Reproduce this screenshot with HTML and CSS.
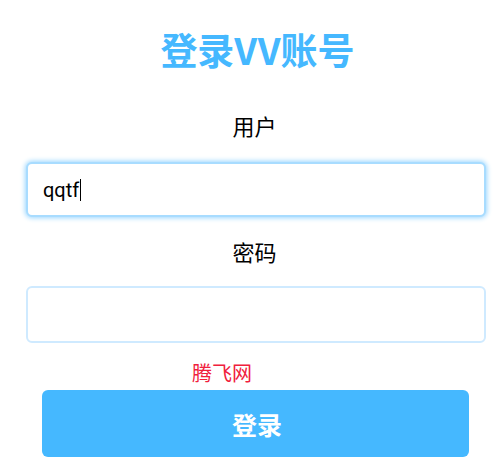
FILE: index.html
```html
<!DOCTYPE html>
<html lang="zh-CN">
<head>
<meta charset="utf-8">
<title>登录VV账号</title>
<link rel="stylesheet" href="styles.css">
</head>
<body>
<main class="login">
  <h1 class="title">登录VV账号</h1>
  <div class="label">用户</div>
  <div class="field field-focused"><span class="value">qqtf</span><span class="caret"></span></div>
  <div class="label label-second">密码</div>
  <div class="field field-second"></div>
  <p class="brand">腾飞网</p>
  <button class="submit" type="button">登录</button>
</main>
</body>
</html>
```

FILE: styles.css
```css
html, body {
  margin: 0;
  padding: 0;
  background: #ffffff;
}

body {
  font-family: "Noto Sans CJK SC", "Noto Sans", sans-serif;
  color: #000000;
}

.login {
  width: 493px;
  display: flex;
  flex-direction: column;
}

.title {
  margin: 31px 0 0;
  font-size: 37px;
  line-height: 37px;
  font-weight: 700;
  color: #45b8ff;
  text-align: center;
  padding-left: 22px;
}

.label {
  margin: 46px 0 0;
  font-size: 22px;
  line-height: 22px;
  text-align: center;
  padding-left: 16px;
}

.label-second {
  margin-top: 23px;
}

.field {
  box-sizing: border-box;
  margin: 26px 0 0 26px;
  width: 460px;
  height: 55px;
  border: 2px solid #cfeaff;
  border-radius: 6px;
  background: #ffffff;
  display: flex;
  align-items: center;
  padding-left: 15px;
}

.field-focused {
  border-color: #a8dcff;
  box-shadow: 0 0 5px 1px #9ad6ff;
}

.field-second {
  margin-top: 24px;
  height: 57px;
}

.value {
  font-family: "Roboto", "Noto Sans", sans-serif;
  font-size: 20px;
  line-height: 22px;
  color: #000000;
}

.caret {
  display: inline-block;
  width: 1px;
  height: 22px;
  background: #000000;
  margin-left: 1px;
}

.brand {
  margin: 20px 0 0 192px;
  font-size: 20px;
  line-height: 20px;
  color: #f0203c;
}

.submit {
  margin: 7px 0 0 42px;
  width: 427px;
  height: 67px;
  border: 0;
  border-radius: 6px;
  background: #45b8ff;
  color: #ffffff;
  font-family: "Noto Sans CJK SC", sans-serif;
  font-size: 25px;
  font-weight: 700;
  padding: 0 0 0 3px;
}
```
